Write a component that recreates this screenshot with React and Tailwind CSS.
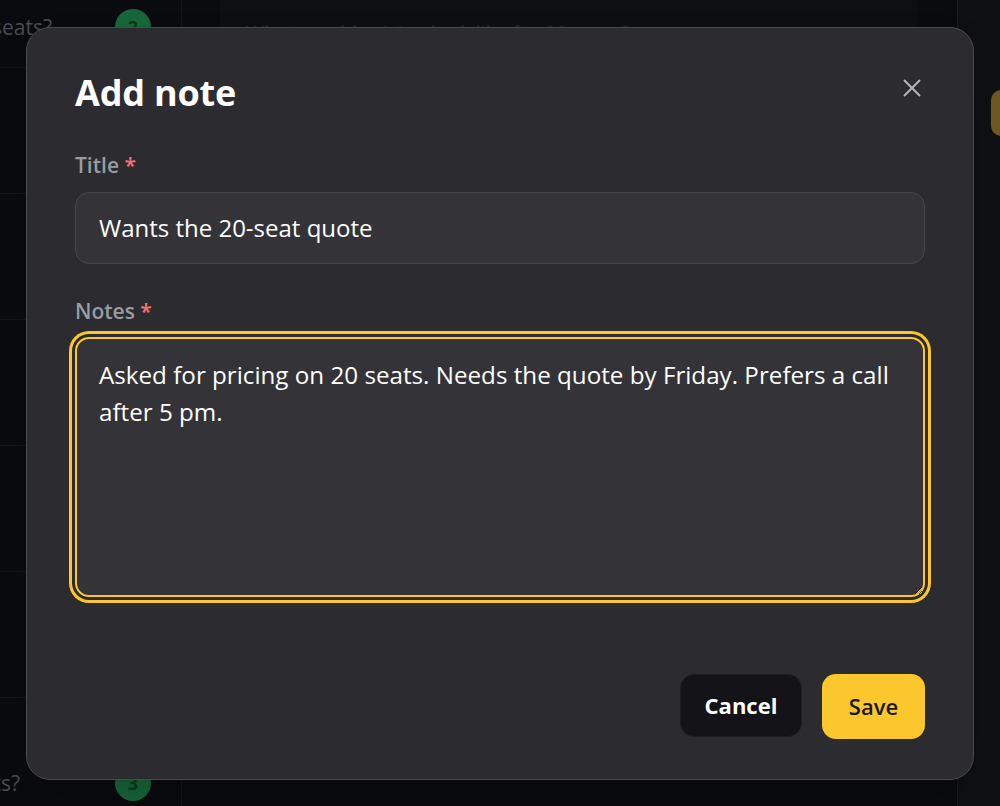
import React from "react";

function Row({ text, textW, badge }) {
  return (
    <div className="h-[126px] shrink-0 border-b border-[#15161b] flex items-start pt-[67px]">
      <div
        className="flex justify-end overflow-hidden whitespace-nowrap text-[21px] leading-[36px] text-[#4a4c54]"
        style={{ width: textW }}
      >
        {text}
      </div>
      {badge ? (
        <div
          className="w-[36px] h-[36px] rounded-full bg-[#17673a] flex items-center justify-center text-[18px] font-bold text-[#0a3a1c]"
          style={{ marginLeft: 115 - textW }}
        >
          {badge}
        </div>
      ) : null}
    </div>
  );
}

export default function App() {
  return (
    <div
      className="relative w-[1000px] h-[806px] overflow-hidden bg-[#0a0b0e] flex"
      style={{ fontFamily: '"Open Sans", "Noto Sans", sans-serif' }}
    >
      {/* background page */}
      <div className="w-[182px] shrink-0 border-r border-[#15161b] flex flex-col mt-[-58px]">
        <Row text="for 20 seats?" textW={52} badge="2" />
        <Row text="" textW={52} />
        <Row text="" textW={52} />
        <Row text="" textW={52} />
        <Row text="" textW={52} />
        <Row text="" textW={52} />
        <Row text="any discounts?" textW={20} badge="3" />
      </div>
      <div className="flex-1 flex flex-col pl-[38px] pr-[40px]">
        <div className="mt-[-20px] h-[80px] rounded-[20px] bg-[#0e0f13] px-[26px] pt-[38px] text-[20px] text-[#24252b] whitespace-nowrap overflow-hidden">
          What would pricing look like for 20 seats?
        </div>
      </div>
      <div className="w-[43px] shrink-0 bg-[#0f1013] border-l border-[#1a1b20] pt-[90px] pl-[33px]">
        <div className="w-[20px] h-[46px] rounded-[10px] bg-[#6e5a20]" />
      </div>

      {/* modal overlay */}
      <div className="absolute inset-0 flex items-center justify-center">
        <div className="w-[948px] h-[753px] rounded-[24px] border border-[#4a4a50] bg-[#2b2b30] px-[48px] pt-[45px] pb-[40px] flex flex-col shadow-2xl">
          <div className="flex items-start justify-between">
            <h2 className="text-[36px] leading-[40px] font-bold text-white tracking-[-0.2px]">
              Add note
            </h2>
            <button className="mt-[5px] mr-[3px] text-[#b4b4bb]">
              <svg width="20" height="20" viewBox="0 0 20 20" fill="none" stroke="currentColor" strokeWidth="2" strokeLinecap="round">
                <path d="M2.5 2.5L17.5 17.5M17.5 2.5L2.5 17.5" />
              </svg>
            </button>
          </div>

          <label className="mt-[38px] text-[21px] leading-[28px] font-semibold text-[#9a9ba3]">
            Title <span className="text-[#f87171]">*</span>
          </label>
          <input
            className="mt-[13px] h-[72px] w-full rounded-[14px] border border-[#46464d] bg-[#333338] px-[23px] text-[24px] text-white outline-none"
            defaultValue="Wants the 20-seat quote"
            style={{ fontFamily: '"Open Sans", "Noto Sans", sans-serif' }}
          />

          <label className="mt-[33px] text-[21px] leading-[28px] font-semibold text-[#9a9ba3]">
            Notes <span className="text-[#f87171]">*</span>
          </label>
          <textarea
            className="mt-[12px] h-[260px] w-full rounded-[14px] border-2 border-[#fcc62d] bg-[#333338] px-[22px] pt-[17px] pb-[17px] text-[24.2px] leading-[37px] text-white outline-none ring-3 ring-[#fcc62d] ring-offset-3 ring-offset-[#2b2b30] [color-scheme:dark]"
            defaultValue="Asked for pricing on 20 seats. Needs the quote by Friday. Prefers a call after 5 pm."
            style={{ fontFamily: '"Open Sans", "Noto Sans", sans-serif' }}
          />

          <div className="mt-auto flex justify-end gap-[20px]">
            <button className="h-[63px] w-[122px] rounded-[14px] border border-[#1e1e24] bg-[#131318] text-[22px] font-bold text-white">
              Cancel
            </button>
            <button className="h-[65px] w-[103px] rounded-[14px] bg-[#fcc62d] text-[22px] font-semibold text-[#18181b]">
              Save
            </button>
          </div>
        </div>
      </div>
    </div>
  );
}
